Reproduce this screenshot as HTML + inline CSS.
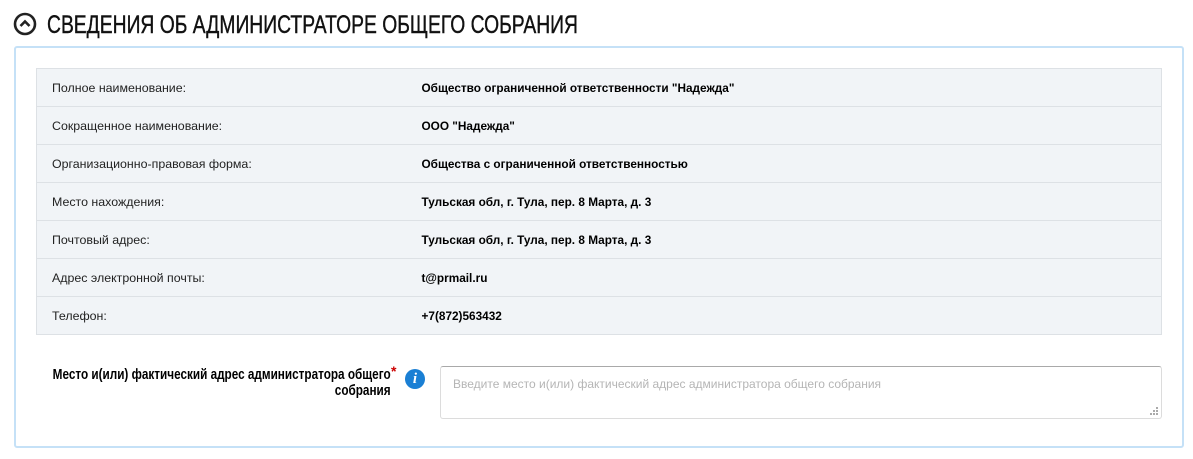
<!DOCTYPE html>
<html><head><meta charset="utf-8"><style>
*{box-sizing:border-box;margin:0;padding:0}
body{width:1193px;height:459px;background:#fff;font-family:"Liberation Sans",sans-serif;color:#000;position:relative;overflow:hidden}
.title{position:absolute;left:47px;top:11px;font-size:25px;white-space:nowrap;transform-origin:0 0;transform:scaleX(0.772);color:#111;-webkit-text-stroke:0.4px #111}
.icon{position:absolute;left:13px;top:12px}
.panel{position:absolute;left:14px;top:46px;width:1170px;height:402px;border:2px solid #c5e1f7;border-radius:3px}
table{position:absolute;left:36px;top:68px;width:1126px;border-collapse:collapse;background:#f1f4f7;border:1px solid #dde1e5}
td{height:38px;font-size:12px;border-bottom:1px solid #dde1e5;padding:0}
td.l{padding-left:15px;width:385px;color:#222;font-size:12.4px}
td.v{font-weight:bold;font-size:11.8px}
.lab{position:absolute;right:802px;top:367px;text-align:right;font-size:15px;font-weight:bold;line-height:16px;white-space:nowrap;transform-origin:100% 0;transform:scaleX(0.783)}
.star{position:absolute;left:391px;top:363px;color:#c00;font-size:14px;font-weight:bold}
.info{position:absolute;left:405px;top:369px;width:20px;height:20px;border-radius:50%;background:#1a7fd4;color:#fff;font:italic bold 15px "Liberation Serif",serif;text-align:center;line-height:20px}
.ta{position:absolute;left:440px;top:366px;width:722px;height:53px;border:1px solid #dcdcdc;border-top-color:#a9a9a9;border-radius:3px;font-size:12px;color:#b5b5b5;padding:10px 12px}
.grip{position:absolute;right:3px;bottom:3px}
</style></head><body>
<svg class="icon" width="24" height="24" viewBox="0 0 24 24"><circle cx="12" cy="12" r="10" fill="none" stroke="#222" stroke-width="2.6"/><path d="M7.5 14 L12 9.5 L16.5 14" fill="none" stroke="#222" stroke-width="2.6"/></svg>
<div class="title">СВЕДЕНИЯ ОБ АДМИНИСТРАТОРЕ ОБЩЕГО СОБРАНИЯ</div>
<div class="panel"></div>
<table>
<tr><td class="l">Полное наименование:</td><td class="v">Общество ограниченной ответственности "Надежда"</td></tr>
<tr><td class="l">Сокращенное наименование:</td><td class="v">ООО "Надежда"</td></tr>
<tr><td class="l">Организационно-правовая форма:</td><td class="v">Общества с ограниченной ответственностью</td></tr>
<tr><td class="l">Место нахождения:</td><td class="v">Тульская обл, г. Тула, пер. 8 Марта, д. 3</td></tr>
<tr><td class="l">Почтовый адрес:</td><td class="v">Тульская обл, г. Тула, пер. 8 Марта, д. 3</td></tr>
<tr><td class="l">Адрес электронной почты:</td><td class="v">t@prmail.ru</td></tr>
<tr><td class="l">Телефон:</td><td class="v">+7(872)563432</td></tr>
</table>
<div class="lab">Место и(или) фактический адрес администратора общего<br>собрания</div>
<div class="star">*</div>
<div class="info">i</div>
<div class="ta">Введите место и(или) фактический адрес администратора общего собрания
<svg class="grip" width="8" height="8" viewBox="0 0 8 8" fill="#aaa"><rect x="6" y="0" width="2" height="2"/><rect x="3" y="3" width="2" height="2"/><rect x="6" y="3" width="2" height="2"/><rect x="0" y="6" width="2" height="2"/><rect x="3" y="6" width="2" height="2"/><rect x="6" y="6" width="2" height="2"/></svg></div>
</body></html>
